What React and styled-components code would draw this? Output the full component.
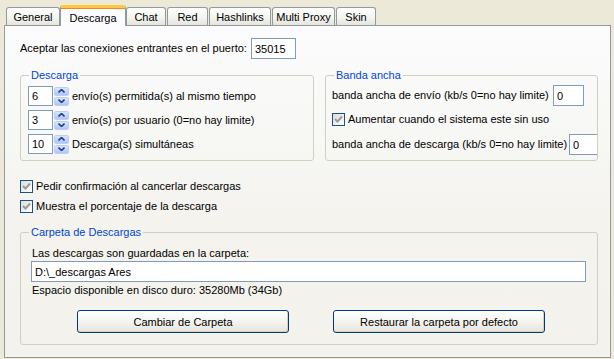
import React from 'react';
import styled, { createGlobalStyle } from 'styled-components';

const GlobalStyle = createGlobalStyle`
  html, body {
    margin: 0;
    padding: 0;
    background: #ece9d8;
  }
  body {
    font-family: "Liberation Sans", Arial, sans-serif;
    font-size: 11px;
    color: #000;
  }
`;

const tabs = [
  { label: 'General', w: 54 },
  { label: 'Descarga', w: 66, active: true },
  { label: 'Chat', w: 40 },
  { label: 'Red', w: 41 },
  { label: 'Hashlinks', w: 62 },
  { label: 'Multi Proxy', w: 63 },
  { label: 'Skin', w: 40 },
];

const Window = styled.div`
  width: 614px;
  height: 359px;
  box-sizing: border-box;
  padding: 5px 3px 1px 4px;
  display: flex;
  flex-direction: column;
  background: #ece9d8;
`;

const TabStrip = styled.div`
  display: flex;
  align-items: flex-end;
  gap: 1px;
  height: 20px;
  padding-left: 2px;
  position: relative;
  z-index: 2;
`;

const Tab = styled.div`
  box-sizing: border-box;
  width: ${(p) => p.$w}px;
  height: ${(p) => (p.$active ? 21 : 18)}px;
  margin: ${(p) => (p.$active ? '0 -1px -1px -1px' : '0')};
  display: flex;
  align-items: center;
  justify-content: center;
  border: 1px solid #919b9c;
  border-bottom: none;
  border-radius: 3px 3px 0 0;
  padding-top: 1px;
  background: ${(p) => (p.$active ? '#fcfcfe' : 'linear-gradient(#ffffff, #f3f3ef 60%, #e5e4dc)')};
  border-top: ${(p) => (p.$active ? '3px solid #ffc83c' : '1px solid #919b9c')};
  box-shadow: ${(p) => (p.$active ? 'inset 0 1px 0 #e68b2c' : 'none')};
  white-space: nowrap;
`;

const Panel = styled.div`
  flex: 1;
  box-sizing: border-box;
  border: 1px solid #919b9c;
  background: linear-gradient(180deg, #fcfcfe 0%, #f7f7f4 35%, #f4f3ee 60%, #f3f2ec 100%);
  padding: 12px 12px 0 15px;
  display: flex;
  flex-direction: column;
`;

const PortRow = styled.div`
  display: flex;
  align-items: center;
  height: 21px;
`;

const Label = styled.span`
  display: inline-block;
  width: ${(p) => (p.$w ? `${p.$w}px` : 'auto')};
  flex: none;
  white-space: nowrap;
  line-height: 13px;
`;

const TextBox = styled.div`
  box-sizing: border-box;
  width: ${(p) => p.$w}px;
  height: ${(p) => p.$h || 21}px;
  margin-top: ${(p) => p.$mt || 0}px;
  border: 1px solid #7f9db9;
  background: #fff;
  padding-left: 3px;
  display: flex;
  align-items: center;
  flex: none;
  white-space: nowrap;
`;

const GroupsRow = styled.div`
  display: flex;
  gap: 11px;
  margin-top: 10px;
  align-items: flex-start;
`;

const Group = styled.fieldset`
  box-sizing: border-box;
  margin: ${(p) => p.$mt || 0}px 0 0 0;
  width: ${(p) => p.$w}px;
  height: ${(p) => p.$h}px;
  border: 1px solid #d0d0bf;
  border-radius: 3px;
  padding: 0;
  min-inline-size: 0;
  overflow: hidden;
`;

const Legend = styled.legend`
  margin-left: 8px;
  padding: 0 2px;
  color: #0046d5;
  line-height: 13px;
`;

const GroupBody = styled.div`
  display: flex;
  flex-direction: column;
  padding: ${(p) => p.$pad};
`;

const SpinRow = styled.div`
  display: flex;
  align-items: center;
  height: 20px;
  & + & {
    margin-top: 4px;
  }
`;

const SpinButtons = styled.div`
  display: flex;
  flex-direction: column;
  gap: 1px;
  margin: 0 3px 0 1px;
  height: 19px;
`;

const SpinBtn = styled.div`
  box-sizing: border-box;
  width: 15px;
  height: 9px;
  border-radius: 2px;
  border: 1px solid #bccdf8;
  background: linear-gradient(#dbe5fd, #b0c5f4);
  display: flex;
  align-items: center;
  justify-content: center;
`;

const FieldRow = styled.div`
  display: flex;
  align-items: center;
  height: 21px;
  margin-top: ${(p) => p.$mt || 0}px;
`;

const CheckRow = styled.div`
  display: flex;
  align-items: center;
  height: 13px;
  gap: 3px;
  margin-top: ${(p) => p.$mt || 0}px;
`;

const Box = styled.div`
  box-sizing: border-box;
  width: 13px;
  height: 13px;
  border: 1px solid #1c5180;
  background: linear-gradient(135deg, #dcdcd7, #ffffff);
  display: flex;
  align-items: center;
  justify-content: center;
  flex: none;
`;

const Text = styled.div`
  line-height: 13px;
  padding-left: 1px;
  margin-top: ${(p) => p.$mt || 0}px;
  white-space: nowrap;
`;

const ButtonRow = styled.div`
  display: flex;
  gap: 44px;
  margin: 13px 0 0 46px;
`;

const Button = styled.div`
  box-sizing: border-box;
  width: 212px;
  height: 23px;
  border: 1px solid #003c74;
  border-radius: 3px;
  background: linear-gradient(#ffffff, #f5f4f0 50%, #e6e4dc);
  box-shadow: inset -1px -1px 0 #d6d0c5;
  display: flex;
  align-items: center;
  justify-content: center;
`;

const Arrow = ({ up }) => (
  <svg width="7" height="4" viewBox="0 0 7 4">
    <path
      d={up ? 'M0.5 3.5 L3.5 0.5 L6.5 3.5' : 'M0.5 0.5 L3.5 3.5 L6.5 0.5'}
      fill="none"
      stroke="#21428a"
      strokeWidth="1.6"
    />
  </svg>
);

const Spinner = ({ value, children }) => (
  <SpinRow>
    <TextBox $w={25} $h={20}>{value}</TextBox>
    <SpinButtons>
      <SpinBtn><Arrow up /></SpinBtn>
      <SpinBtn><Arrow /></SpinBtn>
    </SpinButtons>
    <Label>{children}</Label>
  </SpinRow>
);

const Check = ({ children, mt }) => (
  <CheckRow $mt={mt}>
    <Box>
      <svg width="9" height="9" viewBox="0 0 9 9">
        <path d="M1 4 L3.5 6.5 L8 1.5" fill="none" stroke="#9a9a9a" strokeWidth="2" />
      </svg>
    </Box>
    <Label>{children}</Label>
  </CheckRow>
);

export default function App() {
  return (
    <>
      <GlobalStyle />
      <Window>
        <TabStrip>
          {tabs.map((t) => (
            <Tab key={t.label} $w={t.w} $active={t.active}>{t.label}</Tab>
          ))}
        </TabStrip>
        <Panel>
          <PortRow>
            <Label $w={231}>Aceptar las conexiones entrantes en el puerto:</Label>
            <TextBox $w={45}>35015</TextBox>
          </PortRow>

          <GroupsRow>
            <Group $w={294} $h={92}>
              <Legend>Descarga</Legend>
              <GroupBody $pad="4px 0 0 7px">
                <Spinner value="6">envío(s) permitida(s) al mismo tiempo</Spinner>
                <Spinner value="3">envío(s) por usuario (0=no hay limite)</Spinner>
                <Spinner value="10">Descarga(s) simultáneas</Spinner>
              </GroupBody>
            </Group>
            <Group $w={273} $h={92}>
              <Legend>Banda ancha</Legend>
              <GroupBody $pad="3px 0 0 6px">
                <FieldRow>
                  <Label $w={221}>banda ancha de envío (kb/s 0=no hay limite)</Label>
                  <TextBox $w={31}>0</TextBox>
                </FieldRow>
                <Check mt={7}>Aumentar cuando el sistema este sin uso</Check>
                <FieldRow $mt={8}>
                  <Label $w={237}>banda ancha de descarga (kb/s 0=no hay limite)</Label>
                  <TextBox $w={40}>0</TextBox>
                </FieldRow>
              </GroupBody>
            </Group>
          </GroupsRow>

          <Check mt={19}>Pedir confirmación al cancerlar descargas</Check>
          <Check mt={7}>Muestra el porcentaje de la descarga</Check>

          <Group $w={578} $h={119} $mt={13}>
            <Legend>Carpeta de Descargas</Legend>
            <GroupBody $pad="8px 11px 0 10px">
              <Text>Las descargas son guardadas en la carpeta:</Text>
              <TextBox $w={555} $mt={1}>D:\_descargas Ares</TextBox>
              <Text $mt={2}>Espacio disponible en disco duro: 35280Mb (34Gb)</Text>
              <ButtonRow>
                <Button>Cambiar de Carpeta</Button>
                <Button>Restaurar la carpeta por defecto</Button>
              </ButtonRow>
            </GroupBody>
          </Group>
        </Panel>
      </Window>
    </>
  );
}
